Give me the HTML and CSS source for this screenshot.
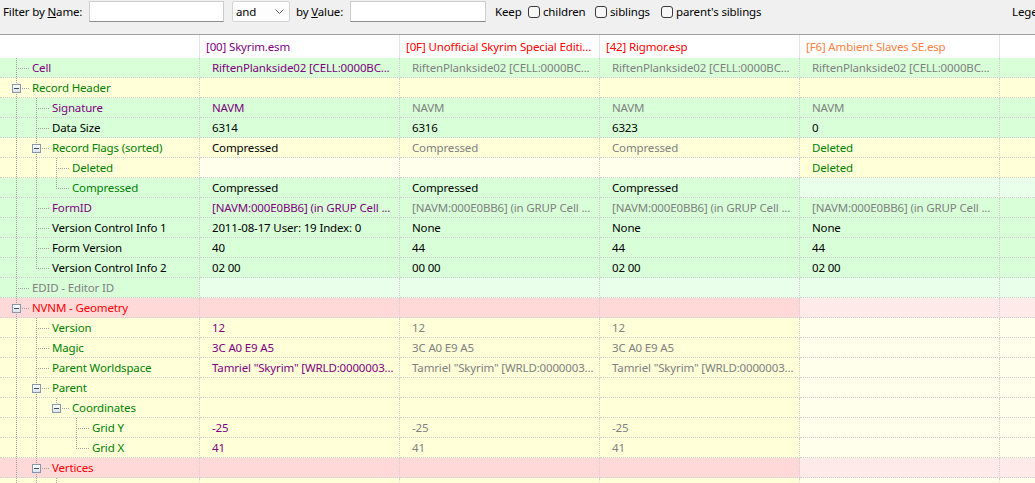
FILE: index.html
```html
<!doctype html>
<html lang="en">
<head>
    <meta charset="UTF-8">
    <title>Record View</title>
    <link rel="stylesheet" href="styles.css">
</head>
<body>
<div class="toolbar">
    <span class="lbl lblName">Filter by <u>N</u>ame:</span>
    <span class="edit editName"></span>
    <span class="combo">and<svg class="chev" width="9" height="5" viewBox="0 0 9 5"><path d="M0.5 0.5 L4.5 4.5 L8.5 0.5" fill="none" stroke="#606060"/></svg></span>
    <span class="lbl lblValue">by <u>V</u>alue:</span>
    <span class="edit editValue"></span>
    <span class="lbl lblKeep">Keep</span>
    <span class="check"></span><span class="lbl lblChildren">children</span>
    <span class="check"></span><span class="lbl lblSiblings">siblings</span>
    <span class="check"></span><span class="lbl">parent's siblings</span>
    <span class="lbl legend">Legend</span>
</div>

<div class="tree">
    <div class="head">
        <div></div>
        <div class="t-purple">[00] Skyrim.esm</div>
        <div class="t-red">[0F] Unofficial Skyrim Special Editi...</div>
        <div class="t-red">[42] Rigmor.esp</div>
        <div class="t-orange">[F6] Ambient Slaves SE.esp</div>
        <div class="last"></div>
    </div>

    <div class="row green">
        <div class="name"><span class="tee"></span><span class="label t-purple">Cell</span></div>
        <div class="cell t-purple">RiftenPlankside02 [CELL:0000BC...</div>
        <div class="cell t-gray">RiftenPlankside02 [CELL:0000BC...</div>
        <div class="cell t-gray">RiftenPlankside02 [CELL:0000BC...</div>
        <div class="cell t-gray">RiftenPlankside02 [CELL:0000BC...</div>
        <div class="cell last"></div>
    </div>
    <div class="row yellow">
        <div class="name"><span class="tee"><i class="box"></i></span><span class="label t-green">Record Header</span></div>
        <div class="cell"></div><div class="cell"></div><div class="cell"></div><div class="cell"></div>
        <div class="cell last"></div>
    </div>
    <div class="row green">
        <div class="name"><span class="line"></span><span class="tee"></span><span class="label t-purple">Signature</span></div>
        <div class="cell t-purple">NAVM</div>
        <div class="cell t-gray">NAVM</div>
        <div class="cell t-gray">NAVM</div>
        <div class="cell t-gray">NAVM</div>
        <div class="cell last"></div>
    </div>
    <div class="row green">
        <div class="name"><span class="line"></span><span class="tee"></span><span class="label">Data Size</span></div>
        <div class="cell">6314</div>
        <div class="cell">6316</div>
        <div class="cell">6323</div>
        <div class="cell">0</div>
        <div class="cell last"></div>
    </div>
    <div class="row yellow">
        <div class="name"><span class="line"></span><span class="tee"><i class="box"></i></span><span class="label t-green">Record Flags (sorted)</span></div>
        <div class="cell">Compressed</div>
        <div class="cell t-gray">Compressed</div>
        <div class="cell t-gray">Compressed</div>
        <div class="cell t-green">Deleted</div>
        <div class="cell last"></div>
    </div>
    <div class="row yellow">
        <div class="name"><span class="line"></span><span class="line"></span><span class="tee"></span><span class="label t-green">Deleted</span></div>
        <div class="cell pale-yellow"></div>
        <div class="cell pale-yellow"></div>
        <div class="cell pale-yellow"></div>
        <div class="cell t-green">Deleted</div>
        <div class="cell last"></div>
    </div>
    <div class="row green">
        <div class="name"><span class="line"></span><span class="line"></span><span class="end"></span><span class="label t-green">Compressed</span></div>
        <div class="cell">Compressed</div>
        <div class="cell">Compressed</div>
        <div class="cell">Compressed</div>
        <div class="cell pale-green"></div>
        <div class="cell last pale-green"></div>
    </div>
    <div class="row green">
        <div class="name"><span class="line"></span><span class="tee"></span><span class="label t-purple">FormID</span></div>
        <div class="cell t-purple">[NAVM:000E0BB6] (in GRUP Cell ...</div>
        <div class="cell t-gray">[NAVM:000E0BB6] (in GRUP Cell ...</div>
        <div class="cell t-gray">[NAVM:000E0BB6] (in GRUP Cell ...</div>
        <div class="cell t-gray">[NAVM:000E0BB6] (in GRUP Cell ...</div>
        <div class="cell last"></div>
    </div>
    <div class="row green">
        <div class="name"><span class="line"></span><span class="tee"></span><span class="label">Version Control Info 1</span></div>
        <div class="cell">2011-08-17 User: 19 Index: 0</div>
        <div class="cell">None</div>
        <div class="cell">None</div>
        <div class="cell">None</div>
        <div class="cell last"></div>
    </div>
    <div class="row green">
        <div class="name"><span class="line"></span><span class="tee"></span><span class="label">Form Version</span></div>
        <div class="cell">40</div>
        <div class="cell">44</div>
        <div class="cell">44</div>
        <div class="cell">44</div>
        <div class="cell last"></div>
    </div>
    <div class="row green">
        <div class="name"><span class="line"></span><span class="end"></span><span class="label">Version Control Info 2</span></div>
        <div class="cell">02 00</div>
        <div class="cell">00 00</div>
        <div class="cell">02 00</div>
        <div class="cell">02 00</div>
        <div class="cell last"></div>
    </div>
    <div class="row green">
        <div class="name"><span class="tee"></span><span class="label t-gray">EDID - Editor ID</span></div>
        <div class="cell pale-green"></div>
        <div class="cell pale-green"></div>
        <div class="cell pale-green"></div>
        <div class="cell pale-green"></div>
        <div class="cell last pale-green"></div>
    </div>
    <div class="row pink">
        <div class="name"><span class="tee"><i class="box"></i></span><span class="label t-red">NVNM - Geometry</span></div>
        <div class="cell"></div><div class="cell"></div><div class="cell"></div>
        <div class="cell pale-pink"></div>
        <div class="cell last pale-pink"></div>
    </div>
    <div class="row yellow">
        <div class="name"><span class="line"></span><span class="tee"></span><span class="label t-green">Version</span></div>
        <div class="cell t-purple">12</div>
        <div class="cell t-gray">12</div>
        <div class="cell t-gray">12</div>
        <div class="cell pale-yellow"></div>
        <div class="cell last pale-yellow"></div>
    </div>
    <div class="row yellow">
        <div class="name"><span class="line"></span><span class="tee"></span><span class="label t-green">Magic</span></div>
        <div class="cell t-purple">3C A0 E9 A5</div>
        <div class="cell t-gray">3C A0 E9 A5</div>
        <div class="cell t-gray">3C A0 E9 A5</div>
        <div class="cell pale-yellow"></div>
        <div class="cell last pale-yellow"></div>
    </div>
    <div class="row yellow">
        <div class="name"><span class="line"></span><span class="tee"></span><span class="label t-green">Parent Worldspace</span></div>
        <div class="cell t-purple">Tamriel "Skyrim" [WRLD:0000003...</div>
        <div class="cell t-gray">Tamriel "Skyrim" [WRLD:0000003...</div>
        <div class="cell t-gray">Tamriel "Skyrim" [WRLD:0000003...</div>
        <div class="cell pale-yellow"></div>
        <div class="cell last pale-yellow"></div>
    </div>
    <div class="row yellow">
        <div class="name"><span class="line"></span><span class="tee"><i class="box"></i></span><span class="label t-green">Parent</span></div>
        <div class="cell"></div><div class="cell"></div><div class="cell"></div>
        <div class="cell pale-yellow"></div>
        <div class="cell last pale-yellow"></div>
    </div>
    <div class="row yellow">
        <div class="name"><span class="line"></span><span class="line"></span><span class="end"><i class="box"></i></span><span class="label t-green">Coordinates</span></div>
        <div class="cell"></div><div class="cell"></div><div class="cell"></div>
        <div class="cell pale-yellow"></div>
        <div class="cell last pale-yellow"></div>
    </div>
    <div class="row yellow">
        <div class="name"><span class="line"></span><span class="line"></span><span class="blank"></span><span class="tee"></span><span class="label t-green">Grid Y</span></div>
        <div class="cell t-purple">-25</div>
        <div class="cell t-gray">-25</div>
        <div class="cell t-gray">-25</div>
        <div class="cell pale-yellow"></div>
        <div class="cell last pale-yellow"></div>
    </div>
    <div class="row yellow">
        <div class="name"><span class="line"></span><span class="line"></span><span class="blank"></span><span class="end"></span><span class="label t-green">Grid X</span></div>
        <div class="cell t-purple">41</div>
        <div class="cell t-gray">41</div>
        <div class="cell t-gray">41</div>
        <div class="cell pale-yellow"></div>
        <div class="cell last pale-yellow"></div>
    </div>
    <div class="row pink">
        <div class="name"><span class="line"></span><span class="tee"><i class="box"></i></span><span class="label t-red">Vertices</span></div>
        <div class="cell"></div><div class="cell"></div><div class="cell"></div>
        <div class="cell pale-pink"></div>
        <div class="cell last pale-pink"></div>
    </div>
    <div class="row yellow">
        <div class="name"><span class="line"></span><span class="line"></span><span class="tee"></span><span class="label t-green"></span></div>
        <div class="cell"></div><div class="cell"></div><div class="cell"></div>
        <div class="cell pale-yellow"></div>
        <div class="cell last pale-yellow"></div>
    </div>
</div>
</body>
</html>
```

FILE: styles.css
```css
* {
    margin: 0;
    padding: 0;
    box-sizing: border-box;
}

body {
    width: 1035px;
    height: 483px;
    overflow: hidden;
    background: #fff;
    color: #000;
    font: 11.5px "Noto Sans", sans-serif;
    letter-spacing: -0.15px;
}

/* filter bar */

.toolbar {
    display: flex;
    align-items: center;
    height: 35px;
    padding: 1px 0 12px 3px;
    background: #f0f0f0;
    border-bottom: 1px solid #a0a0a0;
    white-space: nowrap;
}

.toolbar .lbl {
    flex: none;
}

.toolbar .lblName {
    width: 86px;
}

.toolbar .lblValue {
    width: 54px;
}

.toolbar .lblKeep {
    width: 33px;
}

.toolbar .lblChildren {
    width: 52px;
}

.toolbar .lblSiblings {
    width: 51px;
}

.toolbar .edit {
    flex: none;
    height: 21px;
    background: #fff;
    border: 1px solid #cdcdcd;
    border-bottom-color: #8c8c8c;
}

.toolbar .editName {
    width: 135px;
    margin-right: 8px;
}

.toolbar .editValue {
    width: 136px;
    margin-right: 9px;
}

.toolbar .combo {
    flex: none;
    display: flex;
    align-items: center;
    justify-content: space-between;
    width: 58px;
    height: 21px;
    margin-right: 6px;
    padding: 0 5px 0 3px;
    background: #fdfdfd;
    border: 1px solid #d4d4d4;
    border-radius: 2px;
}

.toolbar .check {
    flex: none;
    width: 12px;
    height: 12px;
    margin-right: 3px;
    background: #f7f7f7;
    border: 1px solid #3a3a3a;
    border-radius: 3px;
}

.toolbar .legend {
    width: 23px;
    margin-left: auto;
}

/* record tree */

.head {
    display: flex;
    height: 23px;
    background: #fff;
}

.head div {
    flex: none;
    width: 200px;
    padding-left: 6px;
    line-height: 23px;
    border-right: 1px solid #e4e4e4;
    white-space: nowrap;
    overflow: hidden;
}

.head div.last {
    flex: 1;
    border-right: none;
}

.row {
    display: flex;
    height: 20px;
}

.row > div {
    flex: none;
    width: 200px;
    height: 20px;
    line-height: 19px;
    border-right: 1px dotted #cfcfcf;
    border-bottom: 1px dotted #cfcfcf;
    white-space: nowrap;
    overflow: hidden;
}

.row > div.last {
    flex: 1;
    border-right: none;
}

.row .cell {
    padding-left: 12px;
}

.green > div {
    background: #d8ffd8;
}

.yellow > div {
    background: #ffffd8;
}

.pink > div {
    background: #ffd8d8;
}

.row > .pale-green {
    background: #eaffea;
}

.row > .pale-yellow {
    background: #ffffec;
}

.row > .pale-pink {
    background: #ffeaea;
}

.name {
    display: flex;
    padding-left: 6px;
}

.name .line,
.name .blank,
.name .tee,
.name .end {
    position: relative;
    flex: none;
    width: 20px;
    height: 20px;
}

.name .line::before,
.name .tee::before,
.name .end::before {
    content: "";
    position: absolute;
    left: 10px;
    top: 0;
    width: 1px;
    height: 20px;
    background: repeating-linear-gradient(to bottom, #a0a0a0 0 1px, transparent 1px 2px);
}

.name .end::before {
    height: 10px;
}

.name .tee::after,
.name .end::after {
    content: "";
    position: absolute;
    left: 10px;
    top: 10px;
    width: 14px;
    height: 1px;
    background: repeating-linear-gradient(to right, #a0a0a0 0 1px, transparent 1px 2px);
}

.name .box {
    position: absolute;
    z-index: 1;
    left: 6px;
    top: 6px;
    width: 9px;
    height: 9px;
    background: linear-gradient(#fdfdfd, #dde3ea);
    border: 1px solid #8797ad;
}

.name .box::after {
    content: "";
    position: absolute;
    left: 1px;
    top: 3px;
    width: 5px;
    height: 1px;
    background: #3d4b5f;
}

.name .label {
    margin-left: 6px;
}

.t-purple {
    color: #800080;
}

.t-green {
    color: #008000;
}

.t-red {
    color: #ff0000;
}

.t-gray {
    color: #808080;
}

.t-orange {
    color: #ff8040;
}
```
